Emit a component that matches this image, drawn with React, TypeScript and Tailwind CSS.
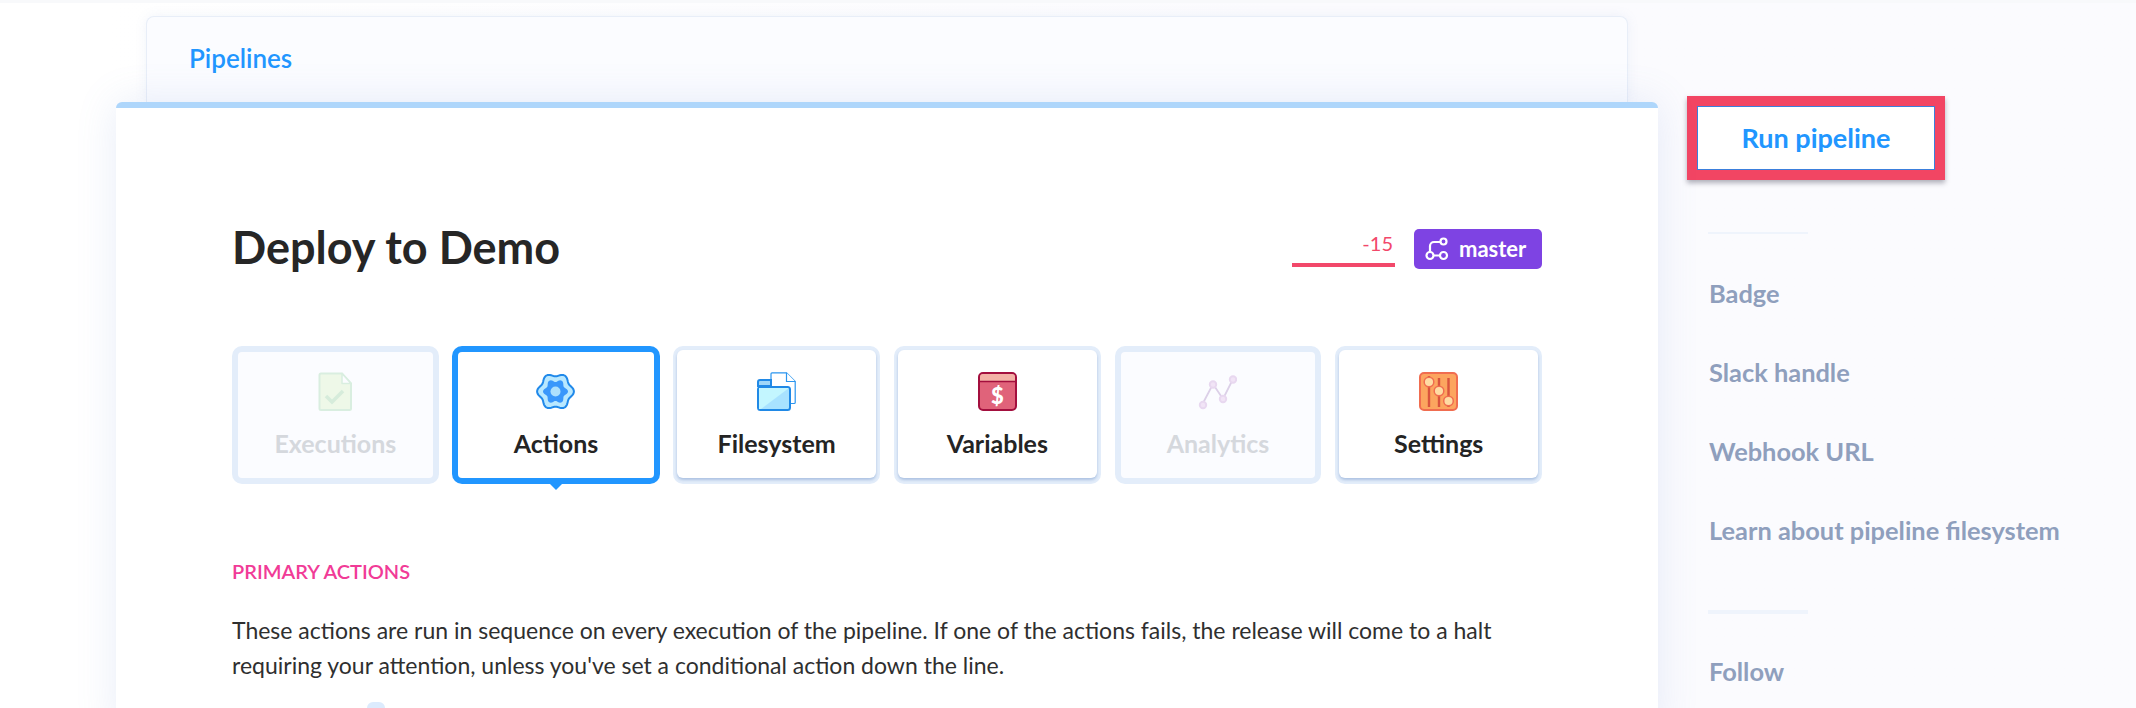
const tabs = [
  { label: "Executions", icon: <DocIcon />, state: "off" },
  { label: "Actions", icon: <GearIcon />, state: "active" },
  { label: "Filesystem", icon: <FolderIcon />, state: "on" },
  { label: "Variables", icon: <VarsIcon />, state: "on" },
  { label: "Analytics", icon: <ChartIcon />, state: "off" },
  { label: "Settings", icon: <SlidersIcon />, state: "on" },
];

// wavy ring used for the gear, lobes = bumps round the edge
function gearPath(cx: number, cy: number, r: number, amp: number, lobes: number) {
  const pts: string[] = [];
  for (let i = 0; i < 96; i++) {
    const a = (i / 96) * Math.PI * 2;
    const rad = r + amp * Math.cos(lobes * a);
    pts.push(`${(cx + rad * Math.cos(a)).toFixed(2)} ${(cy + rad * Math.sin(a)).toFixed(2)}`);
  }
  return `M${pts.join("L")}Z`;
}

function DocIcon() {
  return (
    <svg width="39" height="39" viewBox="0 0 39 39" fill="none">
      <path d="M5 1.500h21l9 10v25a1.500 1.500 0 0 1-1.500 1.500H5A1.500 1.500 0 0 1 3.500 36.500V3A1.500 1.500 0 0 1 5 1.500Z" fill="#eef8e8" stroke="#d9eee0" strokeWidth="2" />
      <path d="M26 1.500v10h9Z" fill="#fbfcff" stroke="#d9eee0" strokeWidth="1.500" strokeLinejoin="round" />
      <path d="m10 24 6 6 11-11" stroke="#d6ecdb" strokeWidth="3.500" />
    </svg>
  );
}

function GearIcon() {
  return (
    <svg width="39" height="39" viewBox="0 0 39 39" fill="none">
      <path d={gearPath(19.5, 19.5, 16.8, 1.6, 6)} fill="#b9e8ff" stroke="#2089ea" strokeWidth="2" strokeLinejoin="round" />
      <path d={gearPath(19.5, 19.5, 11, 1.5, 6)} fill="#3a97fb" />
      <circle cx="19.500" cy="19.500" r="5" fill="#aee0fd" />
    </svg>
  );
}

function FolderIcon() {
  return (
    <svg width="39" height="39" viewBox="0 0 39 39" fill="none">
      <path d="M15 .8h14.500l8.700 8.700v21a1 1 0 0 1-1 1H15a1 1 0 0 1-1-1V1.800a1 1 0 0 1 1-1Z" fill="#fff" stroke="#2a95ef" strokeWidth="1.200" />
      <path d="M29.500 .8v8.700h8.700" fill="#fff" stroke="#2a95ef" strokeWidth="1.200" />
      <path d="M3 8h11v6h-13V10a2 2 0 0 1 2-2Z" fill="#9ed6f8" stroke="#2089e6" strokeWidth="2" />
      <rect x="1" y="15" width="32" height="23" rx="2.500" fill="#a8e2ff" stroke="#2089e6" strokeWidth="2" />
      <path d="M2 16h30L4 37H2Z" fill="#c3f6ff" />
    </svg>
  );
}

function VarsIcon() {
  return (
    <svg width="39" height="39" viewBox="0 0 39 39" fill="none">
      <rect x="1" y="1" width="37" height="37" rx="4" fill="#e0637a" stroke="#a30f3e" strokeWidth="2" />
      <path d="M2 5a3 3 0 0 1 3-3h29a3 3 0 0 1 3 3v4H2Z" fill="#f3b1a6" />
      <path d="M1 9.500h37" stroke="#a30f3e" strokeWidth="1.500" />
      <text x="19.500" y="31.500" textAnchor="middle" fill="#fff" fontSize="22" fontWeight="900" fontFamily="Lato, sans-serif">$</text>
    </svg>
  );
}

function ChartIcon() {
  return (
    <svg width="39" height="39" viewBox="0 0 39 39" fill="none">
      <path d="M4 33 15 12l10 15L35 7" stroke="#dcd0e8" strokeWidth="1.800" />
      <g fill="#f1e4f6" stroke="#e8d8f0" strokeWidth="2">
        <circle cx="5" cy="33" r="3.200" />
        <circle cx="15" cy="12.500" r="3.200" />
        <circle cx="25" cy="27" r="3.200" />
        <circle cx="35" cy="7.500" r="3.200" />
      </g>
    </svg>
  );
}

function SlidersIcon() {
  return (
    <svg width="39" height="39" viewBox="0 0 39 39" fill="none">
      <rect x="1" y="1" width="37" height="37" rx="4" fill="#fca55f" stroke="#f06d50" strokeWidth="2" />
      <g stroke="#d9533d" strokeWidth="2.400">
        <path d="M10 4v31M20 6v29M29.500 6v29" />
      </g>
      <g fill="#ffdba3" stroke="#f06d50" strokeWidth="1.500">
        <circle cx="10" cy="10" r="4.800" />
        <circle cx="20" cy="19" r="4.800" />
        <circle cx="29.500" cy="29" r="4.800" />
      </g>
    </svg>
  );
}

function BranchIcon() {
  return (
    <svg width="24" height="24" viewBox="0 0 24 24" fill="none" stroke="#fff" strokeWidth="2.200">
      <circle cx="18.500" cy="4.500" r="3" />
      <circle cx="5" cy="18.500" r="3.500" />
      <circle cx="18.500" cy="18.500" r="3.500" />
      <path d="M5 15V9a4 4 0 0 1 4-4h6.500M8.500 18.500H15" />
    </svg>
  );
}

function Tab({ label, icon, state }: { label: string; icon: React.ReactNode; state: string }) {
  if (state === "active") {
    return (
      <div className="relative -mx-[1px] h-[138px] rounded-[10px] bg-[#2196ff] p-[6px]">
        <div className="flex h-full flex-col items-center rounded-[4px] bg-white pt-[20px]">
          {icon}
          <span className="mt-[17px] text-[25px] leading-[30px] font-bold text-[#242424]">{label}</span>
        </div>
        <div className="absolute -bottom-[6px] left-1/2 h-0 w-0 -translate-x-1/2 border-x-[6px] border-t-[6px] border-x-transparent border-t-[#2196ff]" />
      </div>
    );
  }
  if (state === "off") {
    return (
      <div className="h-[138px] rounded-[10px] bg-[#e3edfa] p-[6px]">
        <div className="flex h-full flex-col items-center rounded-[4px] bg-[#fbfcff] pt-[20px]">
          {icon}
          <span className="mt-[17px] text-[25px] leading-[30px] font-bold text-[#d5d8dd]">{label}</span>
        </div>
      </div>
    );
  }
  return (
    <div className="h-[138px] rounded-[10px] bg-[#e3edfa] px-[4px] pt-[4px] pb-[6px]">
      <div className="flex h-full flex-col items-center rounded-[6px] bg-white pt-[22px] shadow-[0_2px_3px_rgba(90,130,190,0.4)]">
        {icon}
        <span className="mt-[17px] text-[25px] leading-[30px] font-bold text-[#242424]">{label}</span>
      </div>
    </div>
  );
}

export default function App() {
  return (
    <div className="flex h-[708px] overflow-hidden border-t-[3px] border-[#f8f9fb] bg-linear-to-r from-white from-[5%] to-[#fbfbfe] to-[60%] [font-family:Lato,sans-serif]">
      <div className="relative z-10 -mt-[3px] ml-[116px] flex w-[1542px] shrink-0 flex-col pt-[16px]">
        {/* breadcrumb card sits behind the main one */}
        <div className="mx-[30px] h-[86px] shrink-0 rounded-t-[8px] border border-b-0 border-[#e8eef8] bg-[#fbfcff] pt-[25px] pl-[42px] shadow-[0_0_12px_rgba(120,150,210,0.1)]">
          <a className="text-[26px] leading-[32px] font-semibold text-[#2196ff]">Pipelines</a>
        </div>
        <div className="flex-1 rounded-t-[6px] border-t-[6px] border-[#aed6fb] bg-white px-[116px] pt-[112px] shadow-[0_0_40px_rgba(110,140,210,0.16)]">
          <div className="flex h-[52px] items-center justify-between">
            <h1 className="mt-[2px] text-[45px] leading-[52px] font-bold text-[#262626]">Deploy to Demo</h1>
            <div className="mt-[5px] flex items-center gap-[19px]">
              <div className="mt-[1px] h-[36px] w-[103px] border-b-[4px] border-[#f2486a] pt-[1px] pr-[2px] text-right text-[20px] leading-[22px] text-[#f2486a]">-15</div>
              <div className="flex h-[40px] w-[128px] items-center gap-[10px] rounded-[5px] bg-[#7e43e3] pl-[11px] text-[22px] font-bold text-white">
                <BranchIcon />
                master
              </div>
            </div>
          </div>

          <div className="mt-[74px] grid grid-cols-6 gap-[14px]">
            {tabs.map(t => (
              <Tab key={t.label} label={t.label} icon={t.icon} state={t.state} />
            ))}
          </div>

          <h2 className="mt-[73px] text-[20px] leading-[28px] font-semibold text-[#f13b97]">PRIMARY ACTIONS</h2>
          <p className="mt-[28px] text-[23px] leading-[35px] text-[#2f2f2f]">
            These actions are run in sequence on every execution of the pipeline. If one of the actions fails, the release will come to a halt requiring your attention, unless you've set a conditional action down the line.
          </p>
          <div className="mt-[19px] ml-[135px] h-[30px] w-[18px] rounded-t-[6px] bg-[#dcebfd]" />
        </div>
      </div>

      <aside className="flex-1 pt-[93px] pl-[29px]">
        <button className="h-[84px] w-[258px] border-[10px] border-[#f24563] bg-white text-[27px] font-bold text-[#2196ff] shadow-[0_3px_5px_rgba(60,60,80,0.4),inset_0_0_0_1px_#3b7fdc]">
          Run pipeline
        </button>
        <div className="mt-[52px] ml-[21px] h-[2px] w-[100px] bg-[#eff4fc]" />
        <div className="mt-[43px] ml-[22px] flex flex-col gap-[47px] text-[25.400px] leading-[32px] font-bold text-[#8f9fbd]">
          <a>Badge</a>
          <a>Slack handle</a>
          <a>Webhook URL</a>
          <a className="whitespace-nowrap">Learn about pipeline filesystem</a>
        </div>
        <div className="mt-[64px] ml-[21px] h-[4px] w-[100px] bg-[#eff4fc]" />
        <div className="mt-[41px] ml-[22px] text-[25.400px] leading-[32px] font-bold text-[#8f9fbd]">Follow</div>
      </aside>
    </div>
  );
}
